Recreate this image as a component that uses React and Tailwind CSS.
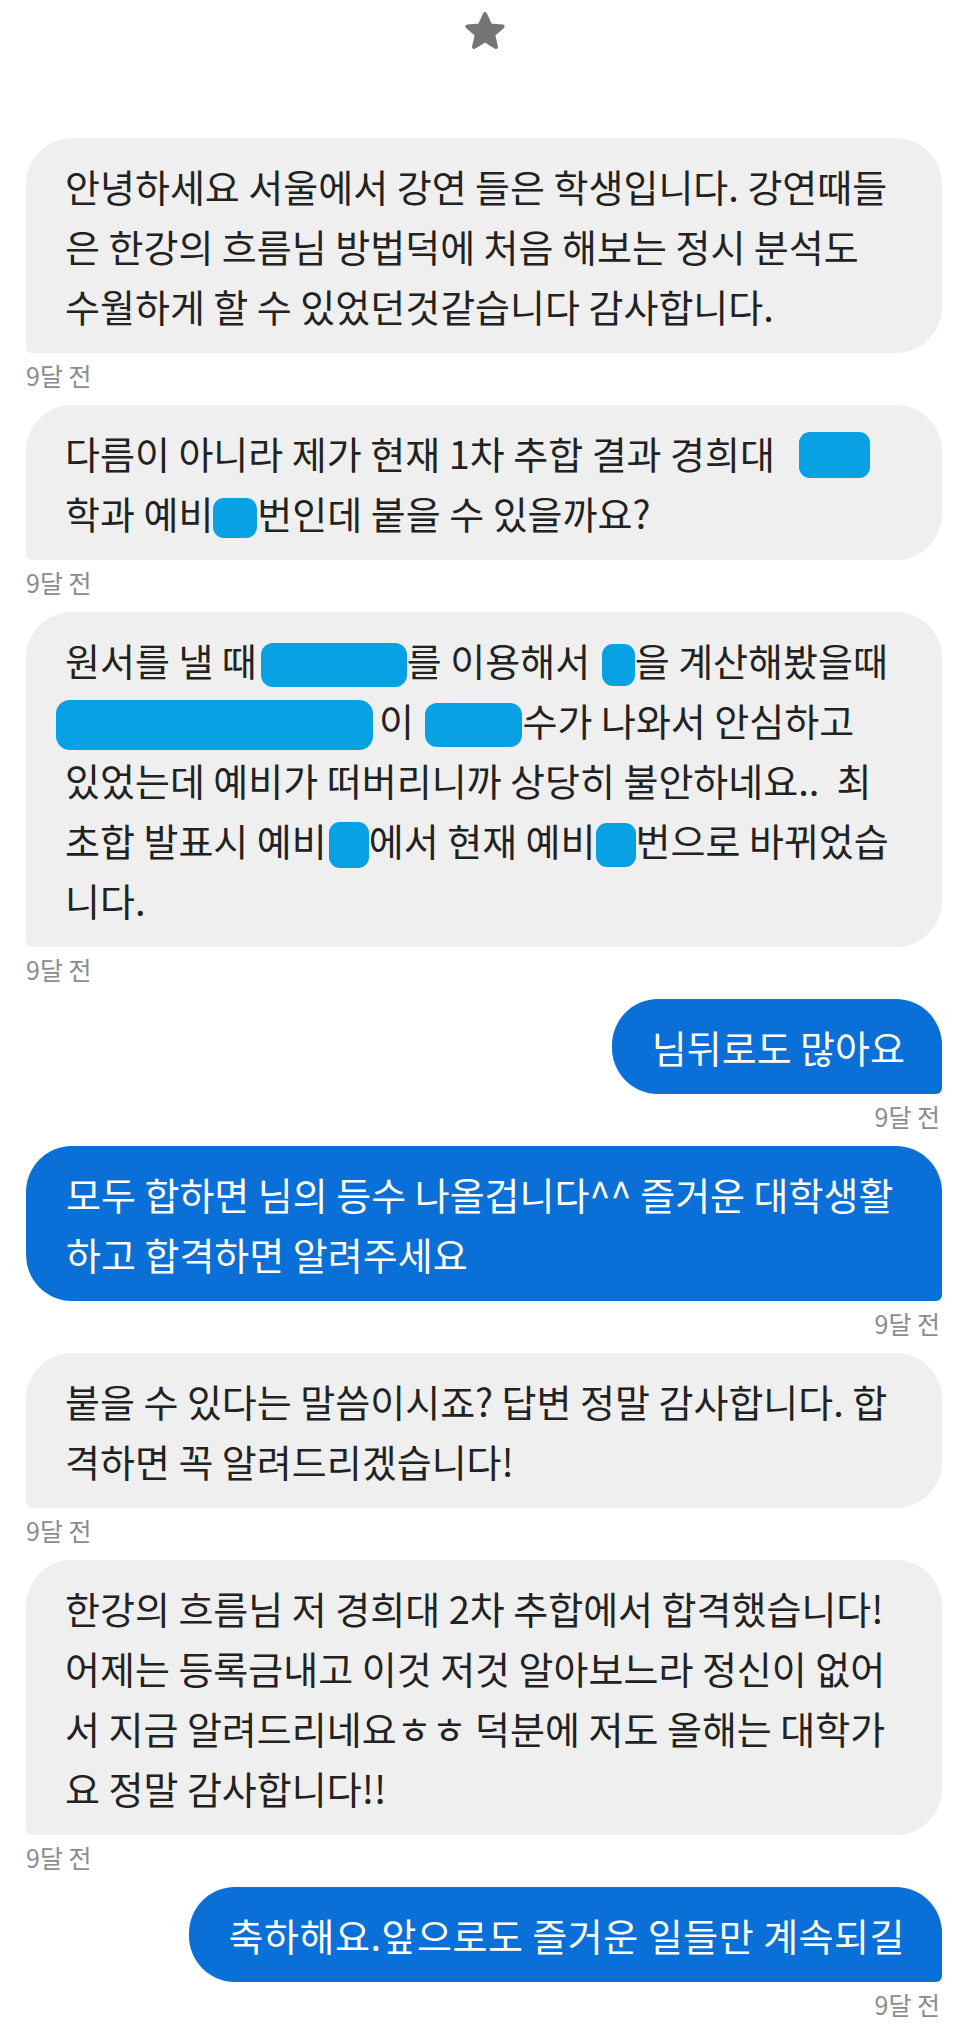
import React from "react";

function Line({ children }) {
  return <div className="whitespace-nowrap h-[60px] leading-[60px]">{children}</div>;
}

function Gray({ children }) {
  return (
    <div className="self-start w-[916px] bg-[#efefef] text-[#222222] rounded-[46px] rounded-bl-[6px] pl-[39px] pr-[10px] py-[17.5px]">
      {children}
    </div>
  );
}

function Blue({ children, full, wide }) {
  return (
    <div
      className={
        "self-end bg-[#0a6fd6] text-white rounded-[46px] rounded-br-[6px] pl-[40px] pr-[37px] py-[17.5px] " +
        (full ? "w-[916px] " : "") +
        (wide ? "tracking-[0.5px]" : "")
      }
    >
      {children}
    </div>
  );
}

function Stamp({ right }) {
  return (
    <div
      className={
        "text-[25px] leading-[30px] text-[#8c8c8c] mt-[7px] mb-[15px] tracking-normal " +
        (right ? "self-end mr-[2px]" : "self-start")
      }
    >
      9달 전
    </div>
  );
}

export default function App() {
  return (
    <div className="w-[969px] min-h-[2023px] bg-white font-[family-name:'Noto_Sans_CJK_KR','Noto_Sans',sans-serif] text-[38px] overflow-hidden">
      <div className="flex justify-center pt-[10px] pb-[84px]">
        <svg width="44" height="44" viewBox="0 0 44 44">
          <polygon
            points="22,4 27.3,15.6 39.6,16.6 30.2,24.7 33,37 22,30.4 11,37 13.8,24.7 4.4,16.6 16.7,15.6"
            fill="#757575"
            stroke="#757575"
            strokeWidth="4"
            strokeLinejoin="round"
          />
        </svg>
      </div>

      <div className="flex flex-col pl-[26px] pr-[27px]">
        <Gray>
          <Line>안녕하세요 서울에서 강연 들은 학생입니다. 강연때들</Line>
          <Line>은 한강의 흐름님 방법덕에 처음 해보는 정시 분석도</Line>
          <Line>수월하게 할 수 있었던것같습니다 감사합니다.</Line>
        </Gray>
        <Stamp />

        <Gray>
          <Line>
            다름이 아니라 제가 현재 1차 추합 결과 경희대{" "}
            <span className="inline-block align-middle w-[71px] h-[46px] ml-[16px] rounded-[11px] bg-[#07a1e4] -mt-[6px]" />
          </Line>
          <Line>
            학과 예비
            <span className="inline-block align-middle w-[44px] h-[40px] rounded-[11px] bg-[#07a1e4]" />
            번인데 붙을 수 있을까요?
          </Line>
        </Gray>
        <Stamp />

        <Gray>
          <Line>
            원서를 낼 때
            <span className="inline-block align-middle w-[146px] h-[44px] ml-[4px] rounded-[12px] bg-[#07a1e4]" />
            를 이용해서{" "}
            <span className="inline-block align-middle w-[33px] h-[42px] ml-[3px] rounded-[11px] bg-[#07a1e4]" />
            을 계산해봤을때
          </Line>
          <Line>
            <span className="inline-block align-middle w-[317px] h-[50px] -ml-[9px] rounded-[14px] bg-[#07a1e4]" />
            <span className="ml-[6px]">이</span>{" "}
            <span className="inline-block align-middle w-[97px] h-[44px] ml-[3px] rounded-[12px] bg-[#07a1e4]" />
            수가 나와서 안심하고
          </Line>
          <Line>있었는데 예비가 떠버리니까 상당히 불안하네요..&nbsp; 최</Line>
          <Line>
            초합 발표시 예비
            <span className="inline-block align-middle w-[40px] h-[46px] ml-[2px] rounded-[11px] bg-[#07a1e4]" />
            에서 현재 예비
            <span className="inline-block align-middle w-[40px] h-[44px] rounded-[11px] bg-[#07a1e4]" />
            번으로 바뀌었습
          </Line>
          <Line>니다.</Line>
        </Gray>
        <Stamp />

        <Blue>
          <Line>님뒤로도 많아요</Line>
        </Blue>
        <Stamp right />

        <Blue full>
          <Line>모두 합하면 님의 등수 나올겁니다^^ 즐거운 대학생활</Line>
          <Line>하고 합격하면 알려주세요</Line>
        </Blue>
        <Stamp right />

        <Gray>
          <Line>붙을 수 있다는 말씀이시죠? 답변 정말 감사합니다. 합</Line>
          <Line>격하면 꼭 알려드리겠습니다!</Line>
        </Gray>
        <Stamp />

        <Gray>
          <Line>한강의 흐름님 저 경희대 2차 추합에서 합격했습니다!</Line>
          <Line>어제는 등록금내고 이것 저것 알아보느라 정신이 없어</Line>
          <Line>서 지금 알려드리네요ㅎㅎ 덕분에 저도 올해는 대학가</Line>
          <Line>요 정말 감사합니다!!</Line>
        </Gray>
        <Stamp />

        <Blue wide>
          <Line>축하해요.앞으로도 즐거운 일들만 계속되길</Line>
        </Blue>
        <Stamp right />
      </div>
    </div>
  );
}
